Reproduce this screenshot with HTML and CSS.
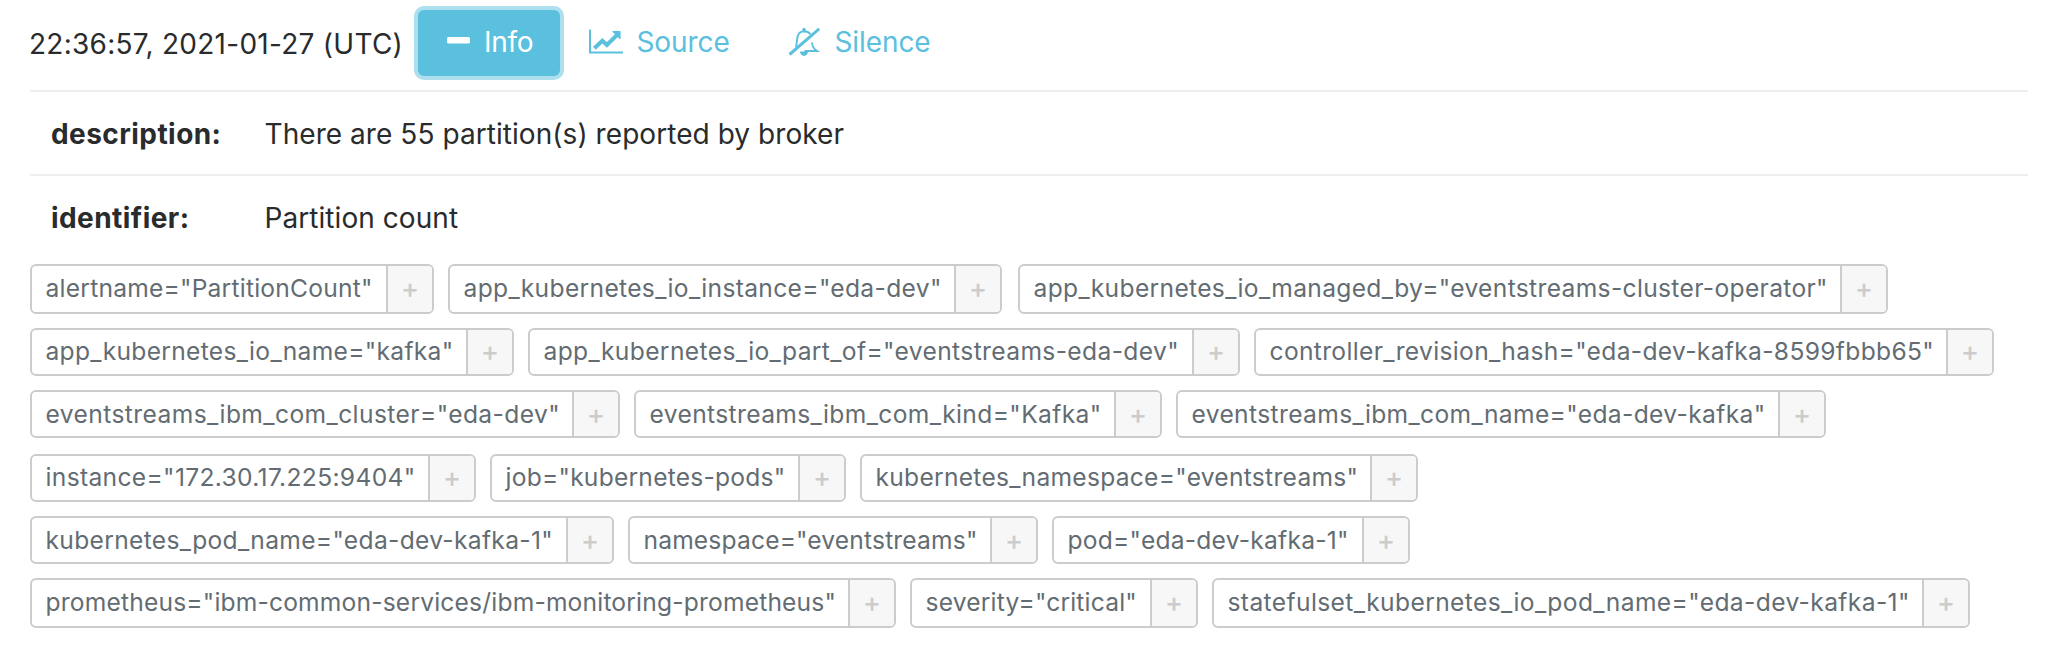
FILE: index.html
```html
<!DOCTYPE html>
<html lang="en">
<head>
<meta charset="utf-8">
<title>Alert</title>
<link rel="stylesheet" href="styles.css">
</head>
<body>
<main class="alert">
  <header class="alert-head">
    <time class="stamp">22:36:57, 2021-01-27 (UTC)</time>
    <button class="btn btn-info"><svg class="ico-minus" width="23" height="7" viewBox="0 0 23 7"><rect width="23" height="6.6" rx="1.6" fill="currentColor"/></svg><span>Info</span></button>
    <a class="btn btn-source"><svg width="34" height="26" viewBox="0 0 34 26" fill="none" stroke="currentColor"><path d="M1 .5V23.6H34" stroke-width="2"/><path d="M5.4 19.2 13.3 11.7 17.9 16 29 5" stroke-width="4"/><path d="M24 2.6H31V9.6z" fill="currentColor" stroke-width="1.2" stroke-linejoin="round"/></svg><span>Source</span></a>
    <a class="btn btn-silence"><svg width="32" height="30" viewBox="0 0 32 30" fill="none" stroke="currentColor"><path d="M1.5 27.5 31.2 1.8" stroke-width="3"/><path d="M7.700 20C9.300 17.500 8.400 12 10 8.500 11 5.800 13.300 4.300 16 4.200 18.600 4.200 21 5.200 22.500 7.200M24 15.500C24.300 20 26 22 29 24H16.500" stroke-width="1.9"/><path d="M14.300 2.500a1.700 1.700 0 0 1 3.400 0V4h-3.400z" fill="currentColor" stroke="none"/><path d="M12 24.500h8a4 4.400 0 0 1-8 0z" fill="currentColor" stroke="none"/></svg><span>Silence</span></a>
  </header>
  <dl class="facts">
    <div class="fact"><dt>description:</dt><dd>There are 55 partition(s) reported by broker</dd></div>
    <div class="fact"><dt>identifier:</dt><dd>Partition count</dd></div>
  </dl>
  <section class="labels">
    <div class="row tall">
      <div class="tag alertname"><span>alertname="PartitionCount"</span><b>+</b></div>
      <div class="tag app-instance"><span>app_kubernetes_io_instance="eda-dev"</span><b>+</b></div>
      <div class="tag app-managed"><span>app_kubernetes_io_managed_by="eventstreams-cluster-operator"</span><b>+</b></div>
    </div>
    <div class="row raised">
      <div class="tag app-name"><span>app_kubernetes_io_name="kafka"</span><b>+</b></div>
      <div class="tag app-part"><span>app_kubernetes_io_part_of="eventstreams-eda-dev"</span><b>+</b></div>
      <div class="tag revision"><span>controller_revision_hash="eda-dev-kafka-8599fbbb65"</span><b>+</b></div>
    </div>
    <div class="row">
      <div class="tag es-cluster"><span>eventstreams_ibm_com_cluster="eda-dev"</span><b>+</b></div>
      <div class="tag es-kind"><span>eventstreams_ibm_com_kind="Kafka"</span><b>+</b></div>
      <div class="tag es-name"><span>eventstreams_ibm_com_name="eda-dev-kafka"</span><b>+</b></div>
    </div>
    <div class="row spaced raised">
      <div class="tag instance"><span>instance="172.30.17.225:9404"</span><b>+</b></div>
      <div class="tag job"><span>job="kubernetes-pods"</span><b>+</b></div>
      <div class="tag k-namespace"><span>kubernetes_namespace="eventstreams"</span><b>+</b></div>
    </div>
    <div class="row">
      <div class="tag k-pod"><span>kubernetes_pod_name="eda-dev-kafka-1"</span><b>+</b></div>
      <div class="tag namespace"><span>namespace="eventstreams"</span><b>+</b></div>
      <div class="tag pod"><span>pod="eda-dev-kafka-1"</span><b>+</b></div>
    </div>
    <div class="row tall">
      <div class="tag prometheus"><span>prometheus="ibm-common-services/ibm-monitoring-prometheus"</span><b>+</b></div>
      <div class="tag severity"><span>severity="critical"</span><b>+</b></div>
      <div class="tag statefulset"><span>statefulset_kubernetes_io_pod_name="eda-dev-kafka-1"</span><b>+</b></div>
    </div>
  </section>
</main>
</body>
</html>
```
FILE: styles.css
```css
* { box-sizing: border-box; }
body { margin: 0; background: #fff; color: #292b2c; font: 28px/42px Inter, "Liberation Sans", sans-serif; }
.alert { padding: 10px 24px 0 30px; }
.alert-head { display: flex; height: 80px; align-items: flex-start; white-space: nowrap; }
.stamp { width: 388px; padding-top: 13px; letter-spacing: .27px; text-indent: -1px; }
.btn { display: flex; align-items: center; height: 66px; padding: 0 0 3px; border: 0; font: inherit; letter-spacing: -.1px; color: #5bc0de; background: none; }
.btn-info { width: 142px; padding-left: 29px; gap: 14px; border-radius: 6px; color: #fff; background: #5bc0de; box-shadow: 0 0 0 4px #addfee; letter-spacing: -.3px; }
.ico-minus { margin-top: -2px; }
.btn-source { padding-left: 29px; gap: 13.5px; width: 200px; }
.btn-silence { padding-left: 28px; gap: 14.5px; }
.facts { margin: 0; }
.fact { display: flex; height: 84px; padding: 21px 0 0 21px; border-top: 2px solid #eceeef; }
dt { width: 213.5px; font-weight: 700; letter-spacing: .44px; }
dd { margin: 0; letter-spacing: .06px; }
.labels { display: flex; flex-direction: column; gap: 14px; padding-top: 6px; }
.row { display: flex; gap: 14px; height: 48px; }
.tall { height: 50px; }
.spaced { margin-top: 2px; }
.tag { display: flex; border: 2px solid #ccc; border-radius: 6px; overflow: hidden; color: #636c72; font-size: 24.6px; line-height: 44px; white-space: nowrap; }
.tag span { flex: 1; padding-left: 13.5px; }
.tag b { flex: none; width: 46px; border-left: 2px solid #ccc; background: #f7f7f7; color: #ccc; font-weight: 500; letter-spacing: 0; text-align: center; font-size: 27px; line-height: 46px; }
.raised .tag { line-height: 42px; }
.raised b { line-height: 44px; }

/* Label widths and tracking */
.alertname { width: 404px; letter-spacing: .22px; }
.app-instance { width: 554px; letter-spacing: .33px; }
.app-managed { width: 870px; margin-left: 2px; letter-spacing: .33px; }
.app-name { width: 484px; letter-spacing: .3px; }
.app-part { width: 712px; letter-spacing: .37px; }
.revision { width: 740px; letter-spacing: .33px; }
.es-cluster { width: 590px; letter-spacing: .41px; }
.es-kind { width: 528px; letter-spacing: .37px; }
.es-name { width: 650px; letter-spacing: .36px; }
.instance { width: 446px; letter-spacing: .33px; }
.job { width: 356px; letter-spacing: .23px; }
.k-namespace { width: 558px; letter-spacing: .27px; }
.k-pod { width: 584px; letter-spacing: .32px; }
.namespace { width: 410px; letter-spacing: .16px; }
.pod { width: 358px; letter-spacing: .23px; }
.prometheus { width: 866px; letter-spacing: .18px; }
.severity { width: 288px; letter-spacing: .18px; }
.statefulset { width: 758px; letter-spacing: .38px; }
```
